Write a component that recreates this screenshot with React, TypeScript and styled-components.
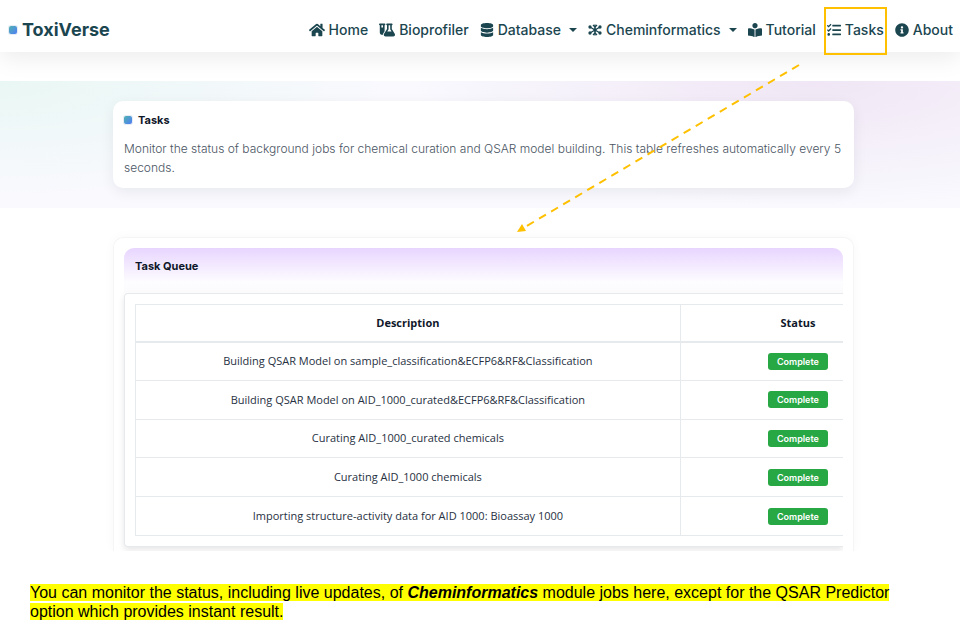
import React from "react";
import styled, { createGlobalStyle, css } from "styled-components";
import { FaHome, FaDatabase, FaBookReader, FaTasks, FaInfoCircle } from "react-icons/fa";
import { FaFlaskVial } from "react-icons/fa6";

const Global = createGlobalStyle`
  * { box-sizing: border-box; }
  body { margin: 0; background: #fff; font-family: Inter, "Open Sans", sans-serif; color: #0f172a; }
`;

const Page = styled.div`
  position: relative;
  min-height: 100vh;
`;

const NavBar = styled.header`
  display: flex;
  align-items: center;
  justify-content: space-between;
  min-height: 52px;
  padding: 8px 7px 0 9px;
  background: #fff;
  box-shadow: 0 6px 24px rgba(0, 0, 0, 0.08);
`;

const Marker = styled.span`
  flex: none;
  width: 8px;
  height: 8px;
  border-radius: 2px;
  background: linear-gradient(135deg, #4fb3b0, #4f7df5);
  box-shadow: 0 0 0 1px #e6ecf5;
`;

const Brand = styled.a`
  display: flex;
  align-items: center;
  gap: 5px;
  color: #1b4650;
  font-size: 18px;
  font-weight: 700;
  line-height: 28px;
  text-decoration: none;
`;

const NavList = styled.nav`
  display: flex;
  align-items: center;
  gap: 11px;
`;

const NavLink = styled.a<{ $current?: boolean }>`
  display: flex;
  align-items: center;
  gap: 4px;
  color: #1b4650;
  font-size: 14px;
  font-weight: 500;
  line-height: 22px;
  text-decoration: none;
  white-space: nowrap;
  svg { flex: none; }
  ${(p) =>
    p.$current &&
    css`
      outline: 2px solid #ffc000;
      padding: 10px 1px 12px;
      margin: 0 -1px -2px;
    `}
`;

const Caret = styled.span`
  margin-left: 4px;
  border: 4px solid transparent;
  border-top-color: currentColor;
  border-bottom: 0;
`;

const Hero = styled.section`
  margin-top: 29px;
  padding: 20px 106px 20px 113px;
  background:
    radial-gradient(ellipse 40% 90% at 0% 0%, #e9f7f4, rgba(233, 247, 244, 0)),
    radial-gradient(ellipse 42% 100% at 85% 0%, #f0e6f5, rgba(240, 230, 245, 0)),
    #f9f9fe;
`;

const IntroCard = styled.div`
  padding: 8px 4px 11px 11px;
  border-radius: 10px;
  background: #fff;
  box-shadow: 0 4px 14px rgba(15, 23, 42, 0.07);
`;

const IntroTitle = styled.h1`
  display: flex;
  align-items: center;
  gap: 6px;
  margin: 0 0 8px;
  font-size: 11px;
  font-weight: 700;
  line-height: 22px;
`;

const IntroText = styled.p`
  margin: 0;
  color: #4a5563;
  font-size: 12px;
  font-weight: 300;
  line-height: 19px;
`;

const QueuePanel = styled.section`
  margin: 29px 106px 0 113px;
  padding: 10px 10px 0;
  border-radius: 10px 10px 0 0;
  border: 1px solid #f5f5f6;
  border-bottom: 0;
  box-shadow: 0 0 12px rgba(15, 23, 42, 0.03);
  clip-path: inset(-12px -12px 0 -12px);
`;

const QueueHeader = styled.h2`
  margin: 0;
  padding: 8px 11px 17px;
  border-radius: 10px 10px 0 0;
  background: linear-gradient(#e8d5ff, #fdfcff 75%, #fbfbfc);
  font-size: 11px;
  font-weight: 700;
  line-height: 20px;
`;

const QueueBody = styled.div`
  padding: 10px 0 10px 10px;
  border: 1px solid #e7eaed;
  border-right: 0;
  border-radius: 4px 0 0 4px;
  background: #fff;
  box-shadow: 0 3px 6px rgba(15, 23, 42, 0.1);
  clip-path: inset(0 0 -12px -6px);
`;

const Tail = styled.div`
  height: 4px;
`;

const TaskTable = styled.table`
  width: 100%;
  height: 232px;
  border-collapse: collapse;
  table-layout: fixed;
  border-left: 1px solid #e7eaed;
  font-family: "Open Sans", sans-serif;
  font-size: 11px;
  line-height: 16px;
  text-align: center;
`;

const DescriptionCol = styled.col`
  width: 77%;
`;

const HeadCell = styled.th<{ $status?: boolean }>`
  height: 37px;
  padding: 0 ${(p) => (p.$status ? 15 : 0)}px 0 ${(p) => (p.$status ? 87 : 0)}px;
  border-top: 1px solid #e7eaed;
  border-bottom: 2px solid #e7eaed;
  border-left: 1px solid #e7eaed;
  font-weight: 700;
`;

const Cell = styled.td<{ $status?: boolean }>`
  height: 38px;
  padding: 0 ${(p) => (p.$status ? 15 : 0)}px 0 ${(p) => (p.$status ? 87 : 0)}px;
  border-bottom: 1px solid #e7eaed;
  border-left: 1px solid #e7eaed;
  color: #273142;
`;

const Badge = styled.span`
  display: block;
  border-radius: 3px;
  background: #28a745;
  color: #fff;
  font-family: Inter, sans-serif;
  font-size: 9px;
  font-weight: 600;
  line-height: 17px;
`;

const Note = styled.p`
  margin: 32px 60px 0 30px;
  color: #000;
  font: 16px/19px "Liberation Sans", Arial, sans-serif;
`;

const Highlight = styled.mark`
  background: #ff0;
  color: inherit;
`;

const Arrow = styled.svg`
  position: absolute;
  top: 64px;
  left: 516px;
  pointer-events: none;
`;

function MoleculeIcon() {
  return (
    <svg width="14" height="14" viewBox="0 0 28 28" fill="currentColor" stroke="currentColor" strokeWidth="2.6" aria-hidden="true">
      <path d="M14 3v22M4 8l20 12M24 8L4 20" fill="none" />
      <path d="M10 4l4 4 4-4M10 24l4-4 4 4" fill="none" />
      <circle cx="14" cy="14" r="2" />
      <circle cx="4" cy="8" r="2" />
      <circle cx="24" cy="8" r="2" />
      <circle cx="4" cy="20" r="2" />
      <circle cx="24" cy="20" r="2" />
    </svg>
  );
}

const tasks = [
  "Building QSAR Model on sample_classification&ECFP6&RF&Classification",
  "Building QSAR Model on AID_1000_curated&ECFP6&RF&Classification",
  "Curating AID_1000_curated chemicals",
  "Curating AID_1000 chemicals",
  "Importing structure-activity data for AID 1000: Bioassay 1000",
];

export default function App() {
  return (
    <Page>
      <Global />
      <NavBar>
        <Brand href="#"><Marker />ToxiVerse</Brand>
        <NavList>
          <NavLink href="#home"><FaHome size={16} />Home</NavLink>
          <NavLink href="#bioprofiler"><FaFlaskVial size={16} />Bioprofiler</NavLink>
          <NavLink href="#database"><FaDatabase size={14} />Database<Caret /></NavLink>
          <NavLink href="#cheminformatics"><MoleculeIcon />Cheminformatics<Caret /></NavLink>
          <NavLink href="#tutorial"><FaBookReader size={14} />Tutorial</NavLink>
          <NavLink href="#tasks" $current aria-current="page"><FaTasks size={14} />Tasks</NavLink>
          <NavLink href="#about"><FaInfoCircle size={14} />About</NavLink>
        </NavList>
      </NavBar>
      <main>
        <Hero>
          <IntroCard>
            <IntroTitle><Marker />Tasks</IntroTitle>
            <IntroText>
              Monitor the status of background jobs for chemical curation and QSAR model building. This table refreshes automatically every 5 seconds.
            </IntroText>
          </IntroCard>
        </Hero>
        <QueuePanel>
          <QueueHeader>Task Queue</QueueHeader>
          <QueueBody>
            <TaskTable>
              <colgroup><DescriptionCol /><col /></colgroup>
              <thead>
                <tr>
                  <HeadCell scope="col">Description</HeadCell>
                  <HeadCell scope="col" $status>Status</HeadCell>
                </tr>
              </thead>
              <tbody>
                {tasks.map((task) => (
                  <tr key={task}>
                    <Cell>{task}</Cell>
                    <Cell $status><Badge>Complete</Badge></Cell>
                  </tr>
                ))}
              </tbody>
            </TaskTable>
          </QueueBody>
          <Tail />
        </QueuePanel>
        <Note>
          <Highlight>
            You can monitor the status, including live updates, of <b><i>Cheminformatics</i></b> module jobs here, except for the QSAR Predictor option which provides instant result.
          </Highlight>
        </Note>
      </main>
      <Arrow width="286" height="170" viewBox="0 0 286 170" aria-hidden="true">
        <path d="M283 1L9 163" fill="none" stroke="#ffc000" strokeWidth="2" strokeDasharray="8 6" />
        <path d="M1 168L6 160L10 167Z" fill="#ffc000" />
      </Arrow>
    </Page>
  );
}
